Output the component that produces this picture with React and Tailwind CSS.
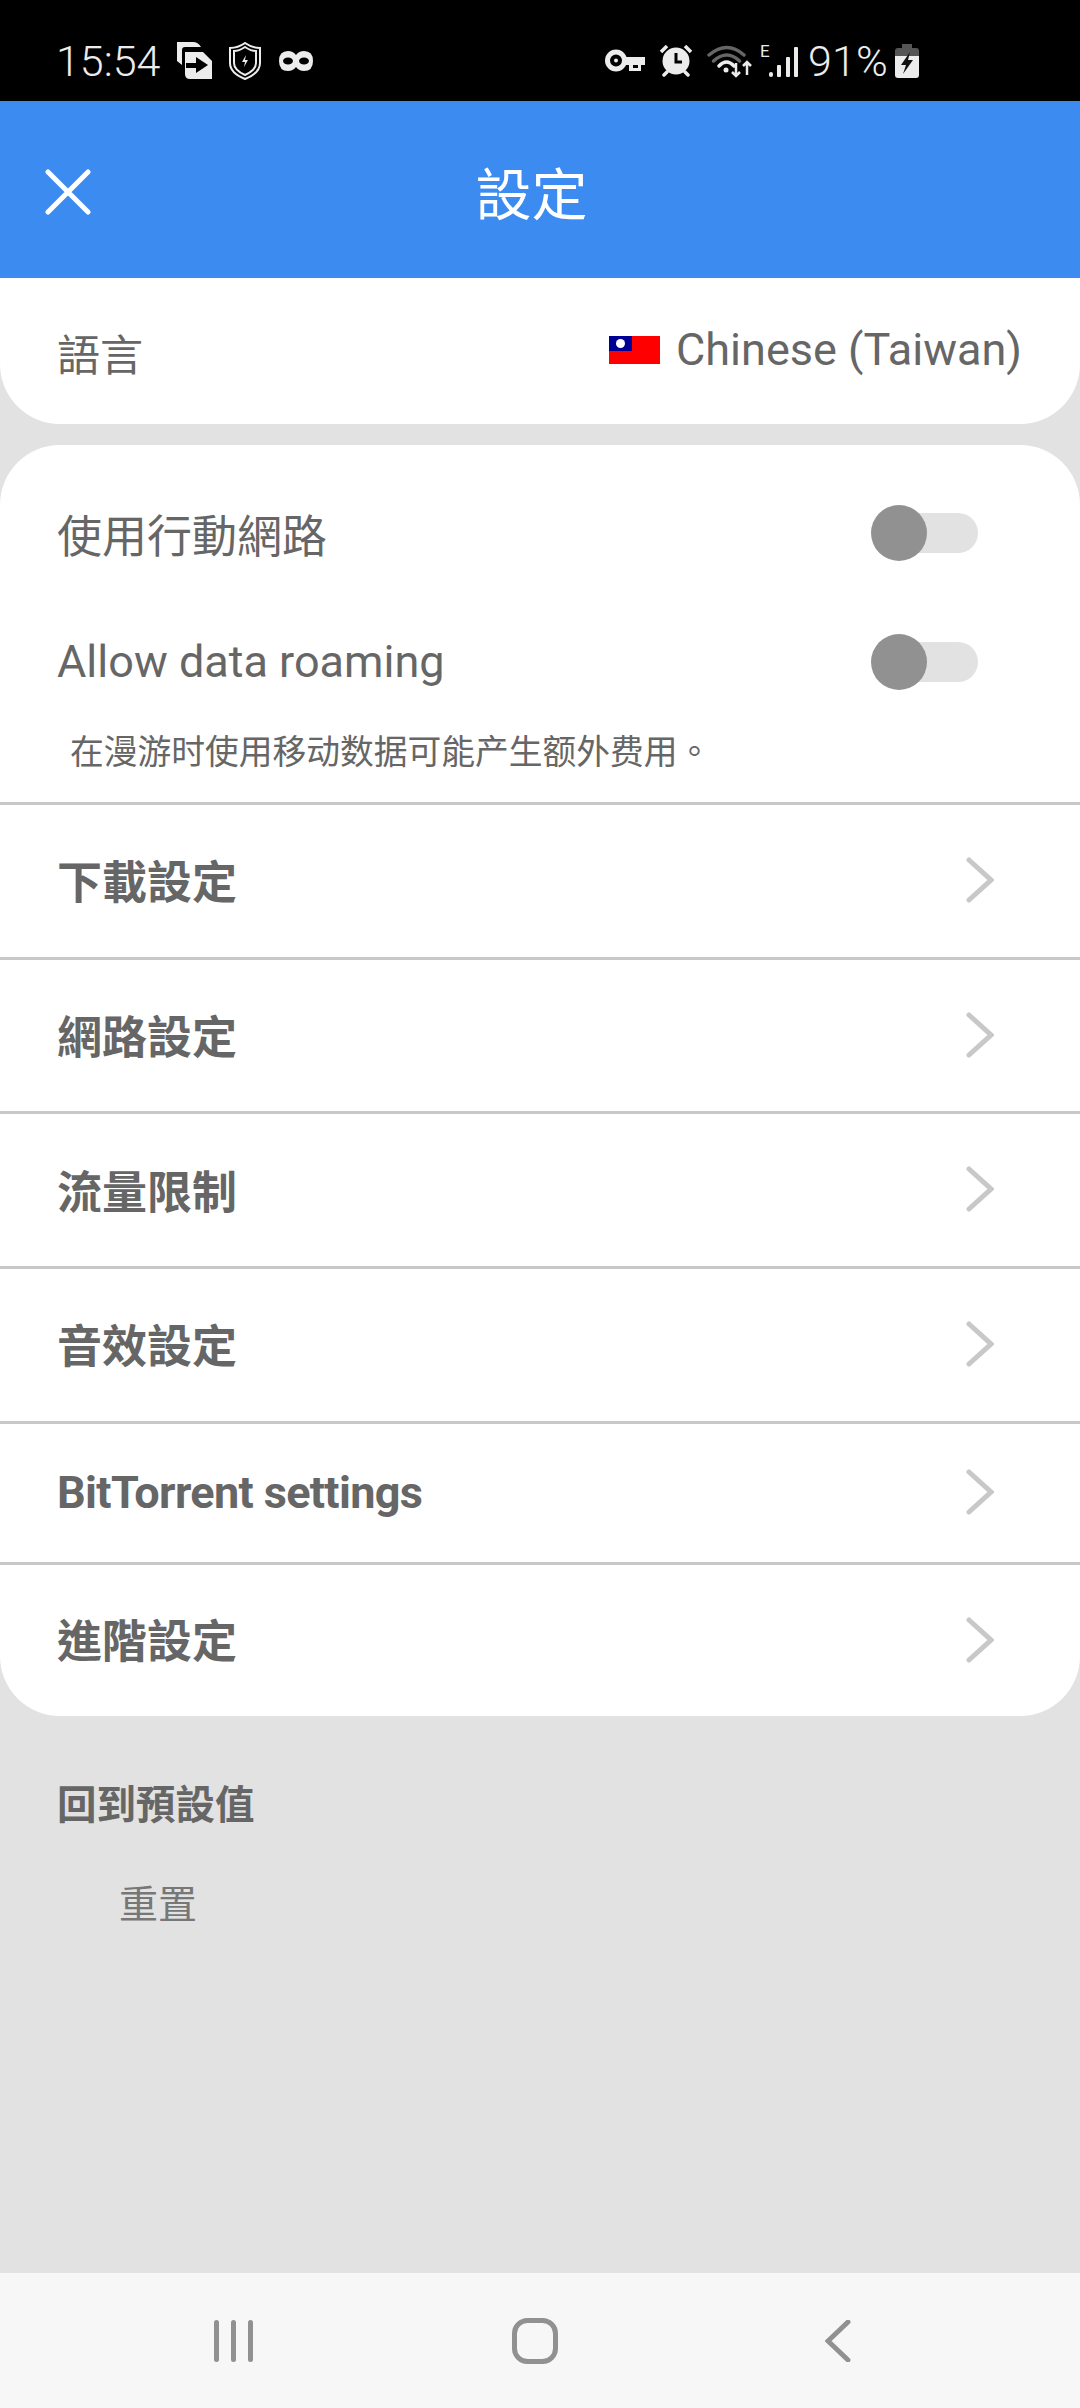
import React from "react";

const rows = [
  { label: "下載設定", h: "h-[152px]", text: "mt-[6px]" },
  { label: "網路設定", h: "h-[151px]", text: "mt-[6px]" },
  { label: "流量限制", h: "h-[152px]", text: "mt-[7px]" },
  { label: "音效設定", h: "h-[152px]", text: "mt-[6px]" },
  { label: "BitTorrent settings", h: "h-[138px]", text: "mt-[-1px] tracking-[-0.65px]" },
];

function Chevron() {
  return (
    <svg width="28" height="46" viewBox="0 0 28 46" fill="none" className="shrink-0 mt-[-2px]">
      <path d="M3 3 L25 23 L3 43" stroke="#c8c8c8" strokeWidth="5" strokeLinecap="round" strokeLinejoin="miter" />
    </svg>
  );
}

function Toggle() {
  return (
    <div className="relative w-[106px] h-[40px] rounded-full bg-[#e2e2e2]">
      <div className="absolute left-[-1px] top-[-8px] w-[56px] h-[56px] rounded-full bg-[#919191]" />
    </div>
  );
}

function StatusIcons() {
  return (
    <div className="flex items-center">
      <svg width="38" height="38" viewBox="0 0 38 38" className="ml-[15px]">
        <path d="M2 0 H18 Q23 0 26 5 H10 Q7 5 7 8 V23 L2 19 Z" fill="#ececec" />
        <path d="M10 10 H28 L37 19 V37 H15 Q10 37 10 32 Z" fill="#ececec" />
        <path d="M11 21 H21 V15 L33 23 L21 31 V26 H11 Z" fill="#000" />
      </svg>
      <svg width="32" height="38" viewBox="0 0 32 38" className="ml-[16px]" fill="none">
        <path d="M16 1 Q23 6 31 6 V21 Q31 31 16 37 Q1 31 1 21 V6 Q9 6 16 1 Z" stroke="#ececec" strokeWidth="2" />
        <path d="M16 5 Q22 9 27 9 V21 Q27 28 16 33 Q5 28 5 21 V9 Q10 9 16 5 Z" stroke="#ececec" strokeWidth="2" />
        <path d="M17 13 L13 20 H16 L15 25 L19 18 H16 Z" fill="#ececec" />
      </svg>
      <svg width="34" height="20" viewBox="0 0 34 20" className="ml-[18px]">
        <path d="M9 0 Q14 0 17 4 Q20 0 25 0 Q34 0 34 10 Q34 20 25 20 Q20 20 17 16 Q14 20 9 20 Q0 20 0 10 Q0 0 9 0 Z" fill="#ececec" />
        <ellipse cx="9" cy="10" rx="5" ry="3.5" fill="#000" />
        <ellipse cx="25" cy="10" rx="5" ry="3.5" fill="#000" />
      </svg>
    </div>
  );
}

function StatusRight() {
  return (
    <div className="flex items-center">
      <svg width="40" height="24" viewBox="0 0 40 24" fill="none">
        <circle cx="11" cy="11.5" r="8.5" stroke="#ececec" strokeWidth="5" />
        <path d="M19 8 H40 V16 H36 V22 H24 V16 H19 Z" fill="#ececec" />
        <path d="M28 16 H33 V19 H28 Z" fill="#000" />
        <circle cx="11" cy="11.5" r="2" fill="#ececec" />
      </svg>
      <svg width="34" height="32" viewBox="0 0 34 32" className="ml-[14px]" fill="none">
        <circle cx="17" cy="16" r="13.5" fill="#ececec" />
        <path d="M17 8 V17 H23" stroke="#000" strokeWidth="3" />
        <path d="M2 7 L8 1 M32 7 L26 1" stroke="#ececec" strokeWidth="3.5" />
        <path d="M5 30 L8 27 M29 30 L26 27" stroke="#ececec" strokeWidth="3.5" strokeLinecap="round" />
      </svg>
      <svg width="45" height="34" viewBox="0 0 45 34" className="ml-[14px]" fill="none">
        <path d="M2 11 Q20 -4 37 11" stroke="#666" strokeWidth="3.5" strokeLinecap="round" />
        <path d="M6.5 17 Q20 5 32.5 17" stroke="#666" strokeWidth="3.5" strokeLinecap="round" />
        <path d="M12 22 Q19.5 14 27 22" stroke="#ececec" strokeWidth="3.5" strokeLinecap="round" />
        <circle cx="19" cy="26" r="2.5" fill="#ececec" />
        <path d="M29 19 V32 M25 28 L29 32 L33 28" stroke="#ececec" strokeWidth="2.5" />
        <path d="M40 31 V18 M36 22 L40 18 L44 22" stroke="#ececec" strokeWidth="2.5" />
      </svg>
      <div className="relative w-[39px] h-[33px] ml-[8px]">
        <span className="absolute left-0 top-[-3px] text-[17px] leading-[20px] text-[#ececec] font-['Roboto']">E</span>
        <svg width="30" height="30" viewBox="0 0 30 30" className="absolute left-[9px] top-[3px]">
          <rect x="0" y="25" width="4" height="5" rx="2" fill="#ececec" />
          <rect x="8" y="18" width="4" height="12" rx="1" fill="#ececec" />
          <rect x="17" y="10" width="4" height="20" rx="1" fill="#ececec" />
          <rect x="25" y="0" width="4" height="30" rx="1" fill="#ececec" />
        </svg>
      </div>
      <span className="ml-[9px] text-[43px] leading-[50px] font-light text-[#ececec] font-['Roboto'] tracking-[0.2px]">91%</span>
      <svg width="24" height="34" viewBox="0 0 24 34" className="ml-[7px]">
        <path d="M7 0 H17 V4 H21 Q24 4 24 7 V13 H0 V7 Q0 4 3 4 H7 Z" fill="#555" />
        <path d="M0 12 H24 V31 Q24 34 21 34 H3 Q0 34 0 31 Z" fill="#ececec" />
        <path d="M15 8 L6 21 H11 L8 30 L18 16 H13 Z" fill="#111" />
      </svg>
    </div>
  );
}

function App() {
  return (
    <div className="w-[1080px] h-[2408px] flex flex-col bg-[#e2e2e2] font-['Roboto','Noto_Sans_CJK_TC',sans-serif] text-[#666666] overflow-hidden">
      <div className="h-[101px] bg-black flex items-center justify-between pl-[56px] pr-[161px] pt-[20px]">
        <div className="flex items-center">
          <span className="text-[43px] leading-[50px] font-light text-[#ececec]">15:54</span>
          <StatusIcons />
        </div>
        <StatusRight />
      </div>

      <div className="h-[177px] bg-[#3b8bf1] flex items-center pl-[45px] pr-[108px] pt-[14px]">
        <svg width="46" height="46" viewBox="0 0 46 46" className="mt-[-10px]">
          <path d="M3 3 L43 43 M43 3 L3 43" stroke="#ffffff" strokeWidth="5" strokeLinecap="round" />
        </svg>
        <h1 className="flex-1 text-center text-white text-[56px] leading-[66px] font-normal mt-[-2px]">設定</h1>
      </div>

      <div className="h-[146px] bg-white rounded-b-[60px] flex items-center justify-between pl-[57px] pr-[58px]">
        <span className="text-[43px] leading-[56px] mt-[9px]">語言</span>
        <div className="flex items-center">
          <svg width="51" height="28" viewBox="0 0 51 28" className="mt-[-2px]">
            <rect width="51" height="28" fill="#fe0000" />
            <rect width="23" height="15" fill="#000095" />
            <circle cx="11.5" cy="7.5" r="4.5" fill="#ffffff" />
          </svg>
          <span className="ml-[16px] text-[45px] leading-[56px] mt-[-2px]">Chinese (Taiwan)</span>
        </div>
      </div>

      <div className="mt-[21px] bg-white rounded-[60px] flex flex-col">
        <div className="flex flex-col pt-[58px] pb-[33px] border-b-[3px] border-[#c8c8c8] h-[360px]">
          <div className="h-[60px] flex items-center justify-between pl-[57px] pr-[102px]">
            <span className="text-[45px] leading-[60px] mt-[9px]">使用行動網路</span>
            <Toggle />
          </div>
          <div className="h-[60px] mt-[69px] flex items-center justify-between pl-[57px] pr-[102px]">
            <span className="text-[45px] leading-[60px]">Allow data roaming</span>
            <Toggle />
          </div>
          <p className="mt-[44px] pl-[70px] text-[33.75px] leading-[34px]">在漫游时使用移动数据可能产生额外费用。</p>
        </div>
        {rows.map((row) => (
          <div
            key={row.label}
            className={`${row.h} box-content flex items-center justify-between pl-[57px] pr-[86px] border-b-[3px] border-[#c8c8c8]`}
          >
            <span className={`text-[45px] leading-[60px] font-bold ${row.text}`}>{row.label}</span>
            <Chevron />
          </div>
        ))}
        <div className="h-[151px] flex items-center justify-between pl-[57px] pr-[86px]">
          <span className="text-[45px] leading-[60px] font-bold mt-[4px]">進階設定</span>
          <Chevron />
        </div>
      </div>

      <div className="flex-1 pl-[57px] pt-[66px]">
        <h2 className="text-[39.5px] leading-[48px] font-bold">回到預設值</h2>
        <button className="block mt-[52px] ml-[62px] text-[39px] leading-[46px] text-[#777777]">重置</button>
      </div>

      <div className="h-[135px] bg-[#f7f7f7] flex items-center pl-[214px]">
        <svg width="39" height="42" viewBox="0 0 39 42">
          <rect x="0" y="0" width="5" height="42" rx="2.5" fill="#919191" />
          <rect x="17" y="0" width="5" height="42" rx="2.5" fill="#919191" />
          <rect x="34" y="0" width="5" height="42" rx="2.5" fill="#919191" />
        </svg>
        <svg width="46" height="46" viewBox="0 0 46 46" className="ml-[259px]" fill="none">
          <rect x="2.5" y="2.5" width="41" height="41" rx="13" stroke="#919191" strokeWidth="5" />
        </svg>
        <svg width="26" height="42" viewBox="0 0 26 42" className="ml-[267px]" fill="none">
          <path d="M23 2 L3 21 L23 40" stroke="#919191" strokeWidth="5" strokeLinecap="round" />
        </svg>
      </div>
    </div>
  );
}

export default App;
